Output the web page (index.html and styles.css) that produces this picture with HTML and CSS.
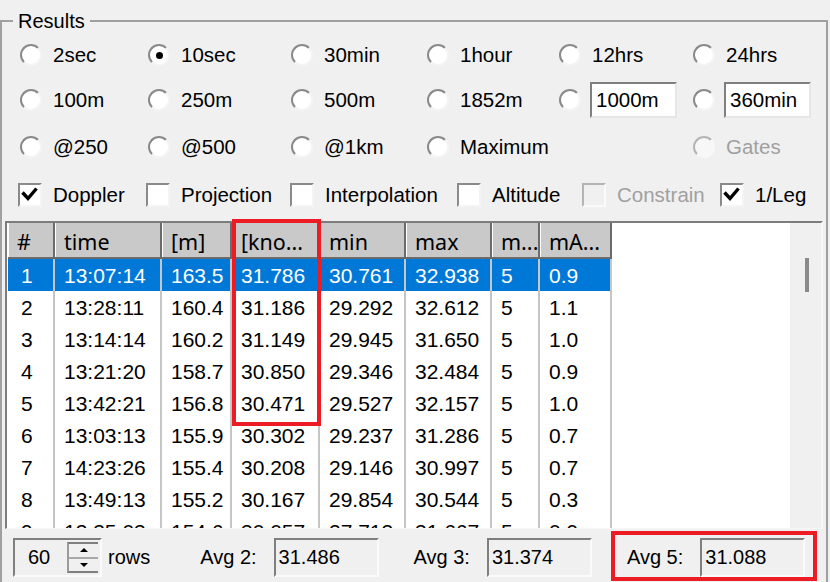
FILE: index.html
```html
<!DOCTYPE html>
<html>
<head>
<meta charset="utf-8">
<link rel="stylesheet" href="styles.css">
</head>
<body>
<fieldset class="results">
  <legend>Results</legend>
  <div class="options">
    <label class="opt"><span class="radio"></span>2sec</label>
    <label class="opt"><span class="radio on"></span>10sec</label>
    <label class="opt"><span class="radio"></span>30min</label>
    <label class="opt"><span class="radio"></span>1hour</label>
    <label class="opt"><span class="radio"></span>12hrs</label>
    <label class="opt"><span class="radio"></span>24hrs</label>

    <label class="opt"><span class="radio"></span>100m</label>
    <label class="opt"><span class="radio"></span>250m</label>
    <label class="opt"><span class="radio"></span>500m</label>
    <label class="opt"><span class="radio"></span>1852m</label>
    <label class="opt with-field"><span class="radio"></span><span class="field">1000m</span></label>
    <label class="opt with-field"><span class="radio"></span><span class="field">360min</span></label>

    <label class="opt"><span class="radio"></span>@250</label>
    <label class="opt"><span class="radio"></span>@500</label>
    <label class="opt"><span class="radio"></span>@1km</label>
    <label class="opt"><span class="radio"></span>Maximum</label>
    <span class="opt"></span>
    <label class="opt disabled"><span class="radio"></span>Gates</label>
  </div>

  <div class="checks">
    <label class="chk"><span class="box"><svg width="20" height="20" viewBox="0 0 20 20"><path d="M2.5 7.5 L8 13.5 L16.5 3.5" fill="none" stroke="#000" stroke-width="3.4"/></svg></span>Doppler</label>
    <label class="chk"><span class="box"></span>Projection</label>
    <label class="chk"><span class="box"></span>Interpolation</label>
    <label class="chk"><span class="box"></span>Altitude</label>
    <label class="chk disabled"><span class="box"></span>Constrain</label>
    <label class="chk"><span class="box"><svg width="20" height="20" viewBox="0 0 20 20"><path d="M2.5 7.5 L8 13.5 L16.5 3.5" fill="none" stroke="#000" stroke-width="3.4"/></svg></span>1/Leg</label>
  </div>

  <div class="list">
    <div class="grid">
      <div class="row head">
        <div class="c">#</div><div class="c">time</div><div class="c">[m]</div><div class="c">[kno...</div><div class="c">min</div><div class="c">max</div><div class="c">m...</div><div class="c">mA...</div>
      </div>
      <div class="row sel">
        <div class="c">1</div><div class="c">13:07:14</div><div class="c">163.5</div><div class="c">31.786</div><div class="c">30.761</div><div class="c">32.938</div><div class="c">5</div><div class="c">0.9</div>
      </div>
      <div class="row">
        <div class="c">2</div><div class="c">13:28:11</div><div class="c">160.4</div><div class="c">31.186</div><div class="c">29.292</div><div class="c">32.612</div><div class="c">5</div><div class="c">1.1</div>
      </div>
      <div class="row">
        <div class="c">3</div><div class="c">13:14:14</div><div class="c">160.2</div><div class="c">31.149</div><div class="c">29.945</div><div class="c">31.650</div><div class="c">5</div><div class="c">1.0</div>
      </div>
      <div class="row">
        <div class="c">4</div><div class="c">13:21:20</div><div class="c">158.7</div><div class="c">30.850</div><div class="c">29.346</div><div class="c">32.484</div><div class="c">5</div><div class="c">0.9</div>
      </div>
      <div class="row">
        <div class="c">5</div><div class="c">13:42:21</div><div class="c">156.8</div><div class="c">30.471</div><div class="c">29.527</div><div class="c">32.157</div><div class="c">5</div><div class="c">1.0</div>
      </div>
      <div class="row">
        <div class="c">6</div><div class="c">13:03:13</div><div class="c">155.9</div><div class="c">30.302</div><div class="c">29.237</div><div class="c">31.286</div><div class="c">5</div><div class="c">0.7</div>
      </div>
      <div class="row">
        <div class="c">7</div><div class="c">14:23:26</div><div class="c">155.4</div><div class="c">30.208</div><div class="c">29.146</div><div class="c">30.997</div><div class="c">5</div><div class="c">0.7</div>
      </div>
      <div class="row">
        <div class="c">8</div><div class="c">13:49:13</div><div class="c">155.2</div><div class="c">30.167</div><div class="c">29.854</div><div class="c">30.544</div><div class="c">5</div><div class="c">0.3</div>
      </div>
      <div class="row">
        <div class="c">9</div><div class="c">13:35:03</div><div class="c">154.6</div><div class="c">30.057</div><div class="c">27.713</div><div class="c">31.667</div><div class="c">5</div><div class="c">0.9</div>
      </div>
    </div>
    <div class="scroll"><div class="thumb"></div></div>
  </div>

  <div class="footer">
    <div class="spin-group">
      <div class="spin">
        <span class="spin-val">60</span>
        <span class="spin-btns"><span class="spin-btn up"></span><span class="spin-btn down"></span></span>
      </div>
      <span>rows</span>
    </div>
    <div class="avg"><span>Avg 2:</span><span class="ro">31.486</span></div>
    <div class="avg"><span>Avg 3:</span><span class="ro">31.374</span></div>
    <div class="avg"><span>Avg 5:</span><span class="ro">31.088</span></div>
  </div>
</fieldset>
<div class="mark mark-col"></div>
<div class="mark mark-avg"></div>
</body>
</html>
```
FILE: styles.css
```css
html, body {
  margin: 0;
  padding: 0;
}
body {
  width: 830px;
  height: 582px;
  overflow: hidden;
  background: #f0f0f0;
  font-family: "Liberation Sans", Arial, sans-serif;
  font-size: 20px;
  color: #000;
}
.results {
  margin: 9px 2px 0 0;
  padding: 0;
  border: 2px solid #a0a0a0;
  min-width: 0;
  height: 590px;
  box-sizing: border-box;
}
.results legend {
  margin-left: 11px;
  padding: 0 5px;
  line-height: 24px;
  font-size: 20px;
}
.options {
  display: grid;
  grid-template-columns: 128px 143px 136px 132px 134px 1fr;
  grid-template-rows: 44px 46px 48px;
  padding-left: 18px;
  font-size: 20.5px;
}
.opt {
  display: flex;
  align-items: center;
  gap: 11px;
  white-space: nowrap;
}
.opt.with-field {
  gap: 9px;
}
.radio {
  width: 22px;
  height: 22px;
  box-sizing: border-box;
  border-radius: 50%;
  border: 2px solid;
  border-color: #8a8a8a #f4f4f4 #f4f4f4 #8a8a8a;
  background: #fff;
  display: flex;
  align-items: center;
  justify-content: center;
  flex: none;
}
.radio.on::after {
  content: "";
  width: 7px;
  height: 7px;
  border-radius: 50%;
  background: #000;
}
.disabled {
  color: #a0a0a0;
}
.disabled .radio {
  border-color: #b4b4b4 #f8f8f8 #f8f8f8 #b4b4b4;
  background: #f7f7f7;
}
.field {
  width: 87px;
  height: 36px;
  box-sizing: border-box;
  border: 2px solid;
  border-color: #7f7f7f #e6e6e6 #e6e6e6 #7f7f7f;
  background: #fff;
  padding-left: 4px;
  display: flex;
  align-items: center;
}
.checks {
  display: grid;
  grid-template-columns: 128px 144px 167px 125px 138px 1fr;
  height: 48px;
  align-items: center;
  padding-left: 16px;
  font-size: 20.5px;
}
.chk {
  display: flex;
  align-items: center;
  gap: 11px;
  white-space: nowrap;
}
.box {
  width: 24px;
  height: 24px;
  box-sizing: border-box;
  border: 2px solid;
  border-color: #8a8a8a #f4f4f4 #f4f4f4 #8a8a8a;
  background: #fff;
  flex: none;
}
.box svg {
  display: block;
}
.disabled .box {
  border-color: #b4b4b4 #fafafa #fafafa #b4b4b4;
  background: #f0f0f0;
}
.list {
  margin: 2px 3px 0 3px;
  height: 308px;
  box-sizing: border-box;
  border-style: solid;
  border-width: 2px 2px 1px 2px;
  border-color: #7c7c7c #f8f8f8 #f8f8f8 #7c7c7c;
  background: #fff;
  display: flex;
  overflow: hidden;
}
.grid {
  flex: 1;
  padding-left: 1px;
  font-size: 21px;
}
.row {
  display: grid;
  grid-template-columns: 47px 107px 70px 88px 86px 86px 48px 72px;
  width: 604px;
}
.row .c {
  box-sizing: border-box;
  display: flex;
  align-items: center;
  padding-left: 9px;
  white-space: nowrap;
  overflow: hidden;
}
.head .c {
  height: 36px;
  padding-top: 3px;
  background: #c9c9c9;
  border-right: 2px solid #6b6b6b;
  border-bottom: 2px solid #6b6b6b;
  box-shadow: inset 1px 0 0 #fff;
  font-family: "Noto Sans", "Liberation Sans", sans-serif;
  font-size: 21.5px;
}
.row:not(.head) .c {
  height: 32px;
  padding-top: 2px;
  border-right: 2px solid #c6c6c6;
}
.row:not(.head) .c:first-child {
  padding-left: 13px;
}
.sel {
  background: #0078d7;
  color: #fff;
}
.scroll {
  width: 31px;
  flex: none;
  background: #f0f0f0;
}
.thumb {
  width: 4px;
  height: 34px;
  background: #8a8a8a;
  margin: 35px 0 0 15px;
}
.footer {
  display: flex;
  align-items: center;
  gap: 35px;
  padding: 9px 0 0 11px;
}
.spin-group {
  display: flex;
  align-items: center;
  gap: 6px;
  margin-right: 15px;
}
.spin {
  width: 89px;
  height: 39px;
  box-sizing: border-box;
  border: 2px solid;
  border-color: #7f7f7f #fafafa #fafafa #7f7f7f;
  background: #f0f0f0;
  display: flex;
  align-items: center;
}
.spin-val {
  width: 52px;
  box-sizing: border-box;
  padding-left: 13px;
}
.spin-btns {
  width: 31px;
  height: 31px;
  box-sizing: border-box;
  display: flex;
  flex-direction: column;
  border-top: 2px solid #7f7f7f;
  border-left: 2px solid #9a9a9a;
  border-bottom: 2px solid #7f7f7f;
}
.spin-btn {
  flex: 1;
  display: flex;
  align-items: center;
  justify-content: center;
  background: #f0f0f0;
}
.spin-btn.up {
  border-bottom: 2px solid #a8a8a8;
}
.spin-btn.up::after {
  content: "";
  border-left: 4px solid transparent;
  border-right: 4px solid transparent;
  border-bottom: 4px solid #000;
}
.spin-btn.down::after {
  content: "";
  border-left: 4px solid transparent;
  border-right: 4px solid transparent;
  border-top: 4px solid #000;
}
.avg {
  display: flex;
  align-items: center;
  gap: 17px;
}
.ro {
  width: 105px;
  height: 39px;
  box-sizing: border-box;
  border: 2px solid;
  border-color: #7f7f7f #fafafa #fafafa #7f7f7f;
  background: #f0f0f0;
  padding-left: 3px;
  display: flex;
  align-items: center;
}
.mark {
  position: absolute;
  box-sizing: border-box;
  border: 4px solid #ed1c24;
}
.mark-col {
  left: 232px;
  top: 219px;
  width: 89px;
  height: 207px;
}
.mark-avg {
  left: 611px;
  top: 531px;
  width: 206px;
  height: 50px;
}
```
